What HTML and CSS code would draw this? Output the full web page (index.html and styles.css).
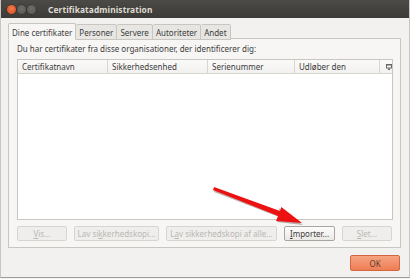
FILE: index.html
```html
<!DOCTYPE html>
<html lang="da">
  <head>
    <meta charset="UTF-8" />
    <title>Certifikatadministration</title>
    <link rel="stylesheet" href="styles.css">
  </head>
  <body>
    <div class="window">
      <div class="titlebar">
        <span class="wbtn close"></span>
        <span class="wbtn"></span>
        <span class="wbtn"></span>
        <span class="title">Certifikatadministration</span>
      </div>

      <div class="content">
        <div class="tabs">
          <div class="tab active">Dine certifikater</div>
          <div class="tab">Personer</div>
          <div class="tab">Servere</div>
          <div class="tab">Autoriteter</div>
          <div class="tab">Andet</div>
        </div>

        <div class="panel">
          <p class="intro">Du har certifikater fra disse organisationer, der identificerer dig:</p>
          <div class="table">
            <div class="thead">
              <div class="th c1">Certifikatnavn</div>
              <div class="th c2">Sikkerhedsenhed</div>
              <div class="th c3">Serienummer</div>
              <div class="th c4">Udløber den</div>
              <div class="th c5">
                <svg width="6" height="6" viewBox="0 0 6 6">
                  <rect x="0.5" y="0.5" width="5" height="3.5" fill="none" stroke="#666" stroke-width="1" />
                  <rect x="0" y="0" width="6" height="1.5" fill="#666" />
                  <rect x="2" y="4.5" width="2" height="1.5" fill="#666" />
                </svg>
              </div>
            </div>
            <div class="tbody"></div>
          </div>
          <div class="actions">
            <button class="btn w1" disabled><u>V</u>is...</button>
            <button class="btn w2" disabled>Lav si<u>k</u>kerhedskopi...</button>
            <button class="btn w3" disabled>L<u>a</u>v sikkerhedskopi af alle...</button>
            <button class="btn w4"><u>I</u>mporter...</button>
            <button class="btn w1" disabled><u>S</u>let...</button>
          </div>
        </div>

        <div class="footer">
          <button class="ok">OK</button>
        </div>
      </div>

      <svg class="arrow" width="410" height="279" viewBox="0 0 410 279">
        <polygon class="arrow-shadow" points="214,189 279,213 277.5,208 302,225 276,222 278,217 213,192" />
        <polygon class="arrow-body" points="213,187 279,211 280.3,207 301,223 275,221 277,216 212,190" />
      </svg>
    </div>
  </body>
</html>
```

FILE: styles.css
```css
* {
  margin: 0;
  padding: 0;
  box-sizing: border-box;
}

body {
  width: 410px;
  height: 279px;
  overflow: hidden;
  font-family: "Noto Sans", "DejaVu Sans", sans-serif;
  font-size: 8px;
  color: #3c3c3c;
  background: #f2f1f0;
}

.window {
  position: relative;
  width: 410px;
  height: 278px;
  background: #f2f1f0;
  border-left: 1px solid #c9c6c1;
  border-right: 1px solid #c9c6c1;
  border-bottom: 1px solid #9f9c97;
}

/* Title bar */
.titlebar {
  height: 18px;
  display: flex;
  align-items: center;
  padding-left: 6px;
  background: linear-gradient(#4b4a46, #3c3b37);
}

.wbtn {
  width: 9px;
  height: 9px;
  border-radius: 50%;
  margin-right: 1px;
  background: radial-gradient(circle at 50% 40%, #6e6d68, #55544f);
  box-shadow: 0 0 0 0.5px #2e2d2a;
}

.wbtn.close {
  background: radial-gradient(circle at 50% 40%, #f37b50, #dd4814);
}

.title {
  margin-left: 11px;
  font-weight: bold;
  font-size: 8.4px;
  color: #dfdbd2;
  letter-spacing: 0.1px;
}

.content {
  padding: 5px 8px 0 7px;
}

/* Tabs */
.tabs {
  display: flex;
  height: 16px;
  position: relative;
  z-index: 1;
}

.tab {
  padding: 2px 3px 0 3px;
  height: 16px;
  background: #e8e6e3;
  border: 1px solid #c9c6c1;
  border-left: none;
  border-radius: 2px 2px 0 0;
  margin-top: 1px;
  white-space: nowrap;
}

.tab.active {
  background: #f7f6f5;
  border-left: 1px solid #c9c6c1;
  border-bottom-color: #f7f6f5;
  margin-top: 0;
  height: 17px;
  padding-top: 3px;
}

.panel {
  height: 210px;
  margin-top: -1px;
  background: #f7f6f5;
  border: 1px solid #c9c6c1;
  padding: 5px 7px 0 8px;
}

.intro {
  height: 15px;
  line-height: 10px;
}

/* Table */
.table {
  height: 161px;
  background: #fff;
  border: 1px solid #c9c6c1;
  display: flex;
  flex-direction: column;
}

.thead {
  display: flex;
  height: 14px;
  background: linear-gradient(#fafaf9, #f2f1f0);
  border-bottom: 1px solid #d8d5d1;
}

.th {
  padding: 1px 0 0 4px;
  border-right: 1px solid #d8d5d1;
  white-space: nowrap;
}

.c1 { width: 90px; }
.c2 { width: 100px; }
.c3 { width: 87px; }
.c4 { width: 85px; }

.c5 {
  flex: 1;
  border-right: none;
  padding: 4px 0 0 6px;
}

.c5 svg {
  display: block;
}

.tbody {
  flex: 1;
}

/* Buttons */
.actions {
  display: flex;
  gap: 7px;
  margin-top: 6px;
}

.btn {
  height: 15px;
  font-family: inherit;
  font-size: 8px;
  color: #3c3c3c;
  background: linear-gradient(#fdfdfc, #ebe9e6);
  border: 1px solid #a8a5a0;
  border-radius: 2px;
  white-space: nowrap;
  overflow: hidden;
}

.btn:disabled {
  color: #bab7b2;
  background: #efeeec;
  border-color: #d8d5d1;
}

.btn.w1 { width: 50px; }
.btn.w2 { width: 85px; }
.btn.w3 { width: 111px; }
.btn.w4 { width: 51px; }

.footer {
  display: flex;
  justify-content: flex-end;
  padding-top: 7px;
  padding-right: 1px;
}

.ok {
  width: 50px;
  height: 16px;
  font-family: inherit;
  font-size: 8px;
  color: #5a3a2e;
  background: linear-gradient(#f5a482, #ef7d55);
  border: 1px solid #d0673f;
  border-radius: 2px;
}

/* Annotation arrow */
.arrow {
  position: absolute;
  left: 0;
  top: 0;
  pointer-events: none;
}

.arrow-shadow {
  fill: rgba(60, 40, 40, 0.35);
}

.arrow-body {
  fill: #ee1111;
}
```
